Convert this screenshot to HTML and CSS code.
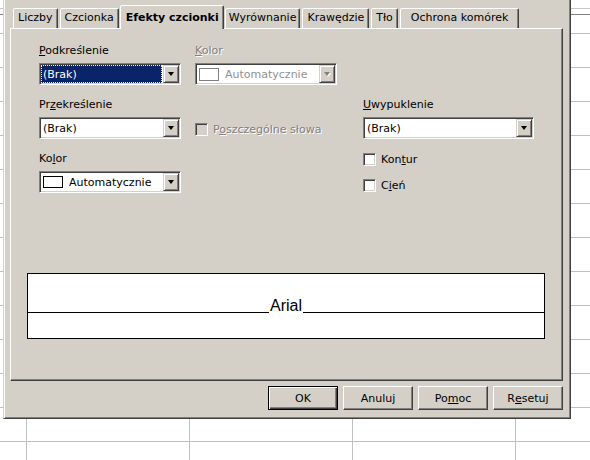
FILE: index.html
```html
<!DOCTYPE html>
<html lang="pl">
<head>
<meta charset="utf-8">
<title>Formatuj komórki</title>
<link rel="stylesheet" href="styles.css">
</head>
<body>
<div class="sheet">
  <div class="sheet-head"></div>
</div>
<div class="dialog">
  <div class="tabs">
    <div class="tab">Liczby</div>
    <div class="tab">Czcionka</div>
    <div class="tab active">Efekty czcionki</div>
    <div class="tab narrow">Wyrównanie</div>
    <div class="tab">Krawędzie</div>
    <div class="tab">Tło</div>
    <div class="tab wide">Ochrona komórek</div>
  </div>
  <div class="page">
    <div class="form">
      <div class="field col-a row-1">
        <div class="label"><u>P</u>odkreślenie</div>
        <div class="combo">
          <div class="value selected">(Brak)</div>
          <div class="drop"><span class="tri"></span></div>
        </div>
      </div>
      <div class="field col-b row-1">
        <div class="label disabled"><u>K</u>olor</div>
        <div class="combo off">
          <div class="value"><span class="swatch"></span>Automatycznie</div>
          <div class="drop"><span class="tri"></span></div>
        </div>
      </div>

      <div class="field col-a row-2">
        <div class="label">Pr<u>z</u>ekreślenie</div>
        <div class="combo">
          <div class="value">(Brak)</div>
          <div class="drop"><span class="tri"></span></div>
        </div>
      </div>
      <div class="field col-b row-2">
        <div class="label"></div>
        <div class="checkline mid disabled"><span class="cb off"></span><span class="cb-text">P<u>o</u>szczególne słowa</span></div>
      </div>
      <div class="field col-c row-2">
        <div class="label"><u>U</u>wypuklenie</div>
        <div class="combo">
          <div class="value">(Brak)</div>
          <div class="drop"><span class="tri"></span></div>
        </div>
      </div>

      <div class="field col-a row-3">
        <div class="label">Ko<u>l</u>or</div>
        <div class="combo">
          <div class="value"><span class="swatch"></span>Automatycznie</div>
          <div class="drop"><span class="tri"></span></div>
        </div>
      </div>
      <div class="field col-c row-3">
        <div class="checkline"><span class="cb"></span><span class="cb-text">Kon<u>t</u>ur</span></div>
        <div class="checkline second"><span class="cb"></span><span class="cb-text">C<u>i</u>eń</span></div>
      </div>
    </div>

    <div class="preview">
      <div class="pv-top"><span class="pv-text">Arial</span></div>
    </div>
  </div>
  <div class="buttons">
    <div class="btn default">OK</div>
    <div class="btn">Anuluj</div>
    <div class="btn">Po<u>m</u>oc</div>
    <div class="btn">R<u>e</u>setuj</div>
  </div>
</div>
</body>
</html>
```
FILE: styles.css
```css
html, body {
  margin: 0;
  padding: 0;
}
body {
  width: 590px;
  height: 460px;
  overflow: hidden;
  position: relative;
  font-family: "DejaVu Sans", "Noto Sans", sans-serif;
  font-size: 11px;
  color: #000;
  background-color: #fff;
}

/* spreadsheet behind the dialog */
.sheet {
  position: absolute;
  inset: 0;
  background-image:
    repeating-linear-gradient(to bottom, transparent 0 33px, #c0c0c0 33px 34px),
    repeating-linear-gradient(to right, transparent 0 26px, #c0c0c0 26px 27px, transparent 27px 163px);
}
.sheet-head {
  margin-top: 8px;
  height: 5px;
  border-top: 1px solid #c8c8c8;
  border-bottom: 1px solid #808080;
}

/* dialog window */
.dialog {
  position: absolute;
  left: 3px;
  top: -6px;
  width: 568px;
  box-sizing: border-box;
  padding: 10px 7px 8px 6px;
  background: #d4d0c8;
  border: 1px solid;
  border-color: #d4d0c8 #404040 #404040 #d4d0c8;
  box-shadow: inset 1px 1px #fff, inset -1px -1px #808080;
}

.tabs {
  position: relative;
  z-index: 1;
  display: flex;
  align-items: flex-end;
  gap: 2px;
  height: 23px;
  padding-left: 3px;
}
.tab {
  box-sizing: border-box;
  height: 20px;
  padding: 0 4px;
  line-height: 18px;
  white-space: nowrap;
  border: 1px solid;
  border-bottom: 0;
  border-color: #fff #404040 transparent #fff;
  border-radius: 2px 2px 0 0;
  box-shadow: inset -1px 0 #808080;
  background: #d4d0c8;
}
.tab.active {
  height: 24px;
  margin: 0 -1px -1px -1px;
  padding: 3px 4px 0 5px;
  font-weight: bold;
}
.tab.narrow {
  padding: 0 3px;
}
.tab.wide {
  padding: 0 10px;
}

.page {
  box-sizing: border-box;
  height: 353px;
  padding: 15px 17px 0 16px;
  border: 1px solid;
  border-color: #fff #404040 #404040 #fff;
  box-shadow: inset -1px -1px #808080;
}

.form {
  display: grid;
  grid-template-columns: 142px 14px 142px 26px 171px;
  grid-template-rows: 41px 41px 41px;
  row-gap: 13px;
  margin-left: 12px;
}
.col-a { grid-column: 1; }
.col-b { grid-column: 3; }
.col-c { grid-column: 5; }
.row-1 { grid-row: 1; }
.row-2 { grid-row: 2; }
.row-3 { grid-row: 3; }

.field {
  display: flex;
  flex-direction: column;
}
.label {
  height: 13px;
  line-height: 13px;
  margin-bottom: 6px;
  white-space: nowrap;
}
.disabled {
  color: #808080;
  text-shadow: 1px 1px 0 #fff;
}

/* combo box */
.combo {
  box-sizing: border-box;
  height: 22px;
  display: flex;
  background: #fff;
  border: 1px solid;
  border-color: #808080 #fff #fff #808080;
  box-shadow: inset 1px 1px #404040, inset -1px -1px #d4d0c8;
  padding: 1px;
}
.value {
  flex: 1;
  display: flex;
  align-items: center;
  padding-left: 2px;
  white-space: nowrap;
  overflow: hidden;
}
.value.selected {
  background: #0a246a;
  color: #fff;
  border: 1px dotted #f4f0d8;
  padding-left: 1px;
  margin-right: 1px;
}
.swatch {
  box-sizing: border-box;
  width: 20px;
  height: 12px;
  border: 1px solid #000;
  background: #fff;
  margin-right: 6px;
}
.combo.off .value {
  color: #909090;
}
.combo.off .swatch {
  border-color: #808080;
  height: 13px;
}
.drop {
  box-sizing: border-box;
  width: 16px;
  height: 18px;
  display: flex;
  align-items: center;
  justify-content: center;
  background: #d4d0c8;
  border: 1px solid;
  border-color: #d4d0c8 #404040 #404040 #d4d0c8;
  box-shadow: inset 1px 1px #fff, inset -1px -1px #808080;
}
.tri {
  width: 0;
  height: 0;
  border-left: 3.5px solid transparent;
  border-right: 3.5px solid transparent;
  border-top: 4px solid #000;
}
.combo.off .tri {
  border-top-color: #808080;
  filter: drop-shadow(1px 1px 0 #fff);
}

/* check boxes */
.checkline {
  display: flex;
  align-items: center;
  height: 15px;
  white-space: nowrap;
}
.checkline.mid {
  height: 22px;
  padding-top: 2px;
  box-sizing: border-box;
}
.checkline.second {
  margin-top: 11px;
}
.cb {
  box-sizing: border-box;
  width: 13px;
  height: 13px;
  flex: none;
  background: #fff;
  border: 1px solid;
  border-color: #808080 #fff #fff #808080;
  box-shadow: inset 1px 1px #404040, inset -1px -1px #d4d0c8;
}
.cb.off {
  background: #d4d0c8;
}
.cb-text {
  margin-left: 5px;
}

/* preview */
.preview {
  margin-top: 80px;
  height: 66px;
  box-sizing: border-box;
  background: #fff;
  border: 1px solid #000;
}
.pv-top {
  height: 38px;
  border-bottom: 1px solid #000;
  display: flex;
  justify-content: center;
  align-items: flex-end;
}
.pv-text {
  display: inline-block;
  font-family: "Liberation Sans", Arial, sans-serif;
  font-size: 16px;
  line-height: 16px;
  background: #fff;
  padding: 0 1px;
  margin-bottom: -2px;
}

/* buttons */
.buttons {
  display: flex;
  justify-content: flex-end;
  gap: 5px;
  margin-top: 5px;
}
.btn {
  box-sizing: border-box;
  width: 70px;
  height: 24px;
  display: flex;
  align-items: center;
  justify-content: center;
  background: #d4d0c8;
  border: 1px solid;
  border-color: #fff #404040 #404040 #fff;
  box-shadow: inset -1px -1px #808080;
}
.btn.default {
  border-color: #000;
  box-shadow: inset 1px 1px #fff, inset -1px -1px #404040, inset -2px -2px #808080;
}
```
